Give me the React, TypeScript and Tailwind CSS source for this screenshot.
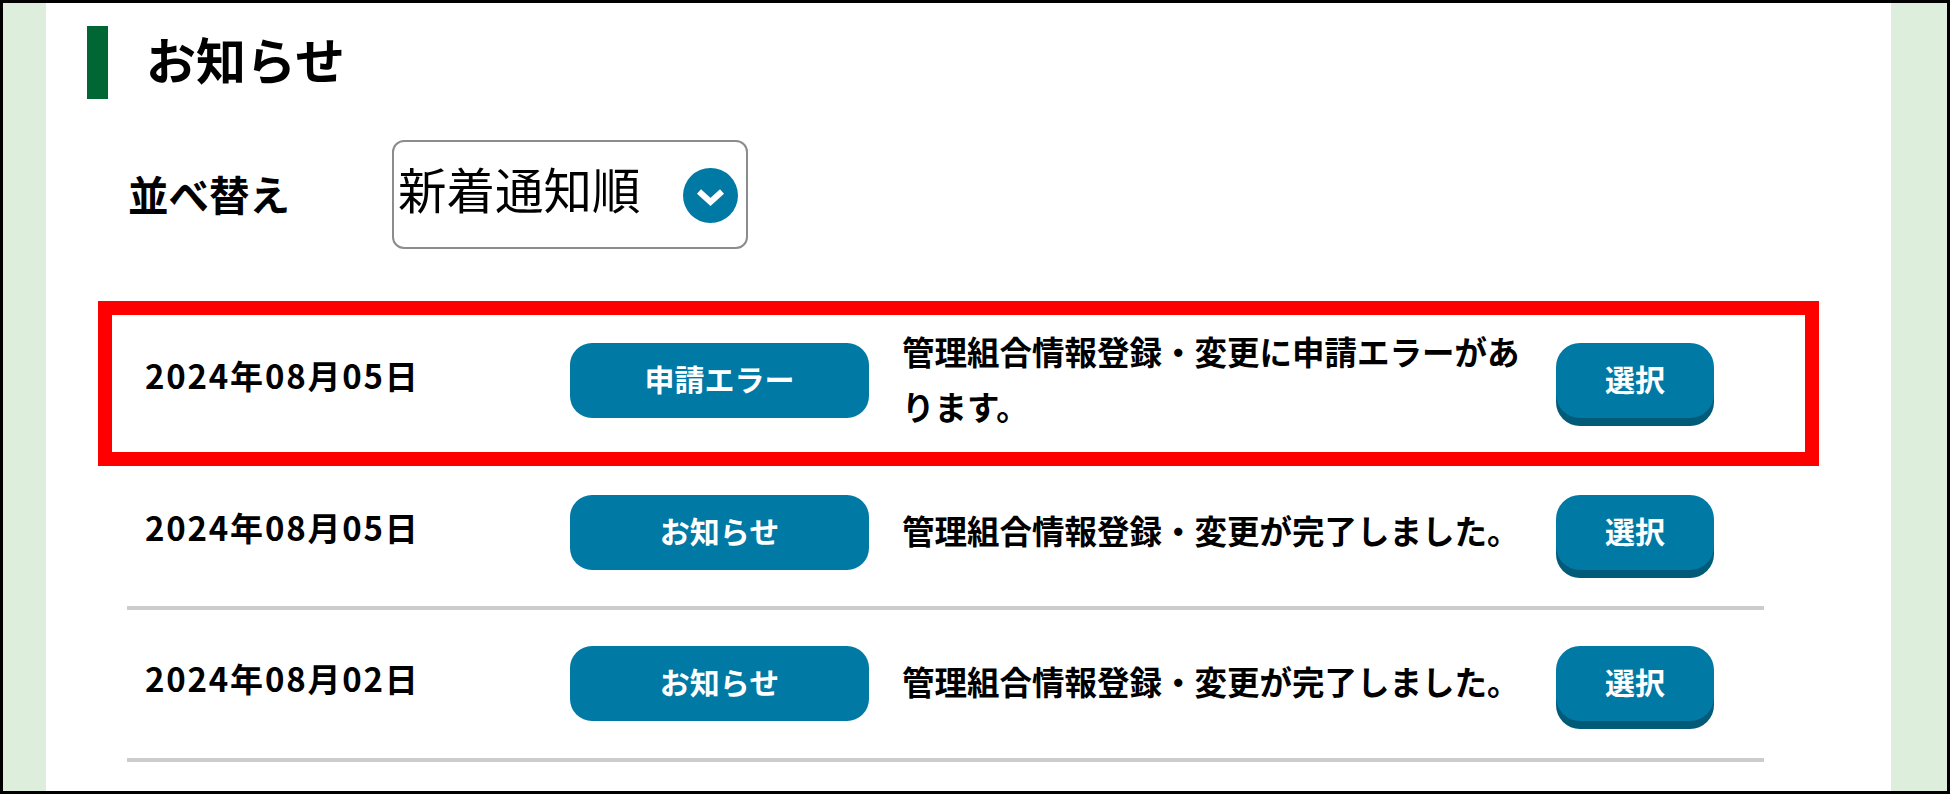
const cjk = "font-['Noto_Sans_CJK_JP','Noto_Sans',sans-serif]";

interface Notice {
  date: string;
  kind: string;
  text: string;
}

const notices: Notice[] = [
  { date: "2024年08月05日", kind: "申請エラー", text: "管理組合情報登録・変更に申請エラーがあります。" },
  { date: "2024年08月05日", kind: "お知らせ", text: "管理組合情報登録・変更が完了しました。" },
  { date: "2024年08月02日", kind: "お知らせ", text: "管理組合情報登録・変更が完了しました。" },
];

function RowBody({ notice }: { notice: Notice }) {
  return (
    <div className="grid grid-cols-[425px_299px_687px_158px] items-start">
      <div className="flex h-[75px] items-center pb-[9px] text-[33px] font-bold tracking-[1.8px] text-black">{notice.date}</div>
      <div className="flex h-[75px] items-center justify-center rounded-[22px] bg-[#0079a5] pb-[4px] text-[30px] font-bold text-white">
        {notice.kind}
      </div>
      <div className="flex h-[75px] items-center pb-[6px] pl-[33px] pr-[32px] text-[32.5px] leading-[55px] font-bold text-black">
        <span>{notice.text}</span>
      </div>
      <button className="h-[75px] rounded-[24px] bg-[#0079a5] pb-[4px] text-[30px] font-bold text-white shadow-[0_8px_0_#005a78]">
        選択
      </button>
    </div>
  );
}

export default function App() {
  return (
    <div className={`${cjk} h-[794px] w-[1950px] border-[3px] border-black bg-white`}>
      <div className="flex h-full">
        <div className="w-[43px] bg-[#deeedd]" />
        <div className="flex-1 overflow-hidden">
          <div className="ml-[41px] mt-[23px] flex items-center">
            <div className="h-[73px] w-[21px] bg-[#006633]" />
            <h1 className="ml-[38px] pb-[10px] text-[50px] leading-none font-bold text-black">お知らせ</h1>
          </div>

          <div className="ml-[82px] mt-[41px] flex items-center">
            <span className="w-[264px] text-[40.5px] font-bold text-black">並べ替え</span>
            <div className="flex h-[109px] w-[356px] items-center justify-between rounded-[12px] border-2 border-[#8c8c8c] pb-[12px] pl-[4px] pr-[8px]">
              <span className="text-[48.5px] leading-none text-black">新着通知順</span>
              <svg width="55" height="55" viewBox="0 0 55 55" className="mt-[14px]">
                <circle cx="27.5" cy="27.5" r="27.5" fill="#0079a5" />
                <path d="M16 23.5 L27.5 34 L39 23.5" fill="none" stroke="#fff" strokeWidth="6" />
              </svg>
            </div>
          </div>

          <div className="ml-[52px] mt-[52px] h-[165px] w-[1721px] border-[14px] border-[#ff0000] pl-[33px] pt-[28px]">
            <RowBody notice={notices[0]} />
          </div>

          <div className="ml-[81px] h-[144px] w-[1637px] border-b-4 border-[#cccccc] pl-[18px] pt-[29px]">
            <RowBody notice={notices[1]} />
          </div>

          <div className="ml-[81px] h-[152px] w-[1637px] border-b-4 border-[#cccccc] pl-[18px] pt-[36px]">
            <RowBody notice={notices[2]} />
          </div>
        </div>
        <div className="w-[56px] bg-[#deeedd]" />
      </div>
    </div>
  );
}
